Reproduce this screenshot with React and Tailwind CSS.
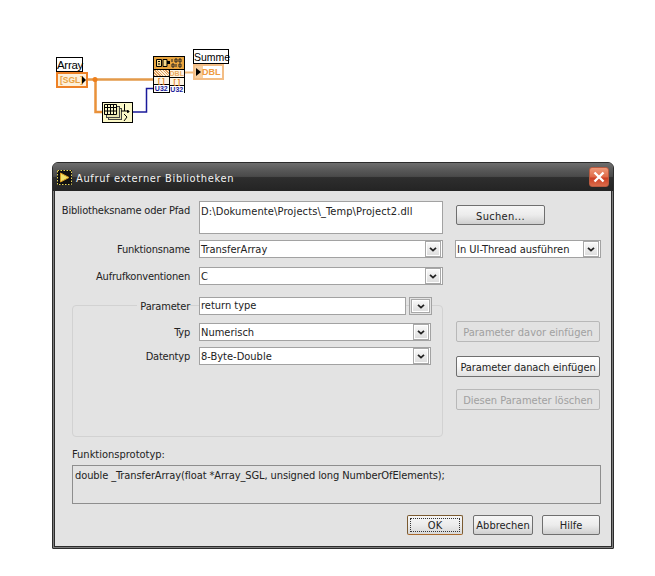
import React from "react";

function Chevron() {
  return (
    <svg width="8" height="5" viewBox="0 0 8 5">
      <path d="M1 0.8 L4 3.6 L7 0.8" fill="none" stroke="#222" strokeWidth="1.8" />
    </svg>
  );
}

function ArrowBox({ className = "w-[16px] h-[16px]" }) {
  return (
    <span className={"flex items-center justify-center border border-[#a8a8a8] bg-gradient-to-b from-[#fafafa] to-[#dcdcdc] shadow-[inset_0_0_0_1px_#fff] shrink-0 " + className}>
      <Chevron />
    </span>
  );
}

function Combo({ text, className = "" }) {
  return (
    <div className={"flex items-center justify-between h-[18px] border border-[#a2a2a2] bg-white pl-[1px] pr-[1px] text-[#222] " + className}>
      <span className="whitespace-nowrap pt-[2px]">{text}</span>
      <ArrowBox />
    </div>
  );
}

function Label({ children, className = "" }) {
  return <div className={"text-right text-[#222] whitespace-nowrap tracking-[-0.2px] pt-[2px] " + className}>{children}</div>;
}

function Btn({ children, className = "", disabled = false }) {
  return (
    <div
      className={
        "flex items-center justify-center h-[20px] rounded-[2px] border whitespace-nowrap pt-[2px] " +
        (disabled
          ? "border-[#b8b8b8] bg-[#e2e2e2] text-[#a0a0a0] "
          : "border-[#6f6f6f] bg-gradient-to-b from-[#f6f6f6] via-[#ececec] to-[#cfcfcf] text-[#222] ") +
        className
      }
    >
      {children}
    </div>
  );
}

function Diagram() {
  return (
    <div className="relative h-[162px] w-full" style={{ fontFamily: '"Liberation Sans", sans-serif', fontStretch: "normal" }}>
      <svg className="absolute left-0 top-0" width="240" height="130">
        <path d="M88 79.5 H153" stroke="#e39a4a" strokeWidth="2.5" fill="none" />
        <path d="M95.5 80 V112 H102" stroke="#e9913a" strokeWidth="2.5" fill="none" />
        <circle cx="95" cy="79.5" r="2.5" fill="#ef7f1a" />
        <path d="M133 112 H146.5 V88.5 H153" stroke="#1a1a9a" strokeWidth="1.5" fill="none" />
        <path d="M184 72.5 H193" stroke="#f0b878" strokeWidth="2" fill="none" />
      </svg>

      <div className="absolute left-[56px] top-[57px] w-[27px] h-[15px] border border-black bg-white text-[11.5px] leading-[14px] text-center text-black tracking-[-0.3px]">Array</div>
      <div className="absolute left-[56px] top-[72px] w-[32px] h-[16px] border-[2px] border-[#ee8126] bg-[#fdf0da] flex items-center">
        <span className="text-[8.5px] font-bold leading-none text-[#e8a040] pl-[2px]">[SGL]</span>
        <span className="absolute right-[0px] top-[2px] w-0 h-0 border-y-[4px] border-y-transparent border-l-[4px] border-l-black" />
      </div>

      <div className="absolute left-[193px] top-[49px] w-[36px] h-[15px] border border-black bg-white text-[10.5px] leading-[14px] text-center text-black">Summe</div>
      <div className="absolute left-[193px] top-[64px] w-[31px] h-[16px] border-[2px] border-[#f3bd85] bg-white flex items-center">
        <span className="absolute left-0 top-0 w-[8px] h-[12px] bg-[#f8cfa0]" />
        <span className="absolute left-[1px] top-[2px] w-0 h-0 border-y-[4px] border-y-transparent border-l-[5px] border-l-black" />
        <span className="relative text-[9px] font-bold leading-none text-[#ee9a40] pl-[7px]">DBL</span>
      </div>

      <div className="absolute left-[153px] top-[56px] w-[32px] h-[37px] bg-black p-[1px] flex flex-col gap-[1px]">
        <div className="h-[12px] bg-[#e9a53f] flex items-center justify-center">
          <svg width="28" height="10" viewBox="0 0 28 10">
            <path d="M1.5 1.5h5v7h-5zM8 1.5h4v7H8zM3 3.5h2M3 6h2" fill="#f7d98a" stroke="#000" strokeWidth="1" />
            <rect x="12" y="3" width="3" height="3" fill="#000" />
            <path d="M17 1v3M20 1h2v3h-2zM24 1h2v3h-2zM17 6h2v3h-2zM21 6v3M24 6h2v3h-2z" fill="none" stroke="#222" strokeWidth="1" />
          </svg>
        </div>
        <div className="flex gap-[1px] flex-1 min-h-0">
          <div className="flex-1 flex flex-col gap-[1px]">
            <div className="h-[7px] bg-[repeating-linear-gradient(45deg,#e0a060_0px,#e0a060_1px,#fff0d8_1px,#fff0d8_2px)]" />
            <div className="h-[7px] bg-[#fdf5e6] flex items-center justify-center text-[7px] leading-none font-bold text-[#e08020]">[ ]</div>
            <div className="h-[7px] bg-white flex items-center justify-center text-[7px] leading-none font-bold text-[#1a1a9a]">U32</div>
          </div>
          <div className="flex-1 flex flex-col gap-[1px]">
            <div className="h-[7px] bg-[#fdf5e6] flex items-center justify-center text-[7px] leading-none font-bold text-[#e8a860]">DBL</div>
            <div className="h-[7px] bg-[#fdf5e6] flex items-center justify-center text-[7px] leading-none font-bold text-[#e08020]">[ ]</div>
            <div className="h-[7px] bg-white flex items-center justify-center text-[7px] leading-none font-bold text-[#1a1a9a]">U32</div>
          </div>
        </div>
      </div>

      <div className="absolute left-[102px] top-[102px] w-[31px] h-[21px] border border-black bg-[#fbf8c8]">
        <svg width="29" height="19" viewBox="0 0 29 19" className="block">
          <rect x="5.5" y="5.5" width="13" height="11" fill="#e6e3b0" stroke="#444" />
          <rect x="3.5" y="3.5" width="13" height="11" fill="#e6e3b0" stroke="#444" />
          <path d="M1.5 1.5h12v10h-12zM1.5 4.5h12M1.5 8h12M4.5 1.5v10M7.5 1.5v10M10.5 1.5v10" fill="#fbf8c8" stroke="#000" />
          <path d="M21.5 1v7M18 8h7M25 7v3M21 11l3 3-3 4" fill="none" stroke="#000" />
          <path d="M24 7l3 1.5L24 10z" fill="#000" />
        </svg>
      </div>
    </div>
  );
}

export default function App() {
  return (
    <div
      className="w-[655px] h-[576px] bg-white overflow-hidden text-[11px] leading-[14px]"
      style={{ fontFamily: '"DejaVu Sans Condensed", "DejaVu Sans", sans-serif', fontStretch: "condensed" }}
    >
      <Diagram />
      <div className="ml-[52px] w-[562px] h-[387px] rounded-t-[6px] rounded-b-[1px] border border-[#2c2c2c] bg-[#7c7c7c] flex flex-col">
        <div className="h-[28px] shrink-0 rounded-t-[5px] flex items-center pl-[4px] pr-[4px] bg-[linear-gradient(to_bottom,#6e6e6e_0%,#555_30%,#4a4a4a_48%,#2e2e2e_52%,#242424_100%)]">
          <svg width="15" height="15" viewBox="0 0 15 15" className="shrink-0">
            <rect x="0" y="0" width="15" height="15" fill="#111" />
            <rect x="0.5" y="0.5" width="14" height="14" fill="none" stroke="#e9d75a" strokeWidth="1" strokeDasharray="1.5 1.5" />
            <path d="M3.5 3 L12 7.5 L3.5 12 Z" fill="#f2e36a" stroke="#d89a20" />
          </svg>
          <span className="ml-[4px] pt-[4px] text-[11px] text-[#f4f4f4] tracking-[0.65px] whitespace-nowrap">Aufruf externer Bibliotheken</span>
          <span className="ml-auto w-[20px] h-[20px] rounded-[3px] border border-[#b85a40] bg-[linear-gradient(to_bottom,#ee9a7a_0%,#e06a48_50%,#cc3f24_55%,#d96b4a_100%)] flex items-center justify-center">
            <svg width="12" height="12" viewBox="0 0 12 12">
              <path d="M1.5 1.5 L10.5 10.5 M10.5 1.5 L1.5 10.5" stroke="#fff" strokeWidth="2.4" />
            </svg>
          </span>
        </div>

        <div className="flex-1 mx-[1px] mb-[1px] border-x border-b border-[#2c2c2c] bg-[#e3e3e3] pt-[10px] flex flex-col">
          <div className="flex items-start">
            <Label className="w-[135px] pt-[3px]">Bibliotheksname oder Pfad</Label>
            <div className="ml-[9px] w-[244px] h-[33px] border border-[#a2a2a2] bg-white pl-[1px] pt-[3px] text-[#222] whitespace-nowrap tracking-[0.12px]">D:\Dokumente\Projects\_Temp\Project2.dll</div>
            <Btn className="ml-[13px] mt-[4px] w-[89px] tracking-[0.3px] pt-[3px]">Suchen...</Btn>
          </div>

          <div className="flex items-center mt-[6px]">
            <Label className="w-[135px]">Funktionsname</Label>
            <Combo text="TransferArray" className="ml-[9px] w-[244px]" />
            <Combo text="In UI-Thread ausführen" className="ml-[12px] w-[146px]" />
          </div>

          <div className="flex items-center mt-[9px]">
            <Label className="w-[135px]">Aufrufkonventionen</Label>
            <Combo text="C" className="ml-[9px] w-[244px]" />
          </div>

          <div className="flex mt-[20px] items-start">
            <div className="ml-[17px] w-[371px] h-[132px] rounded-[4px] border border-[#d2d2d2] shrink-0">
              <div className="flex items-center -mt-[9px]">
                <div className="w-[117px] flex justify-end">
                  <span className="bg-[#e3e3e3] pl-[3px] text-[#222] whitespace-nowrap tracking-[-0.2px] pt-[2px]">Parameter</span>
                </div>
                <div className="ml-[9px] w-[207px] h-[18px] border border-[#a2a2a2] bg-white pl-[1px] leading-[16px] text-[#222]">return type</div>
                <div className="ml-[3px] w-[23px] h-[18px] border border-[#a2a2a2] bg-[#e3e3e3] flex items-center justify-center">
                  <ArrowBox className="w-[19px] h-[14px]" />
                </div>
              </div>
              <div className="flex items-center mt-[8px]">
                <Label className="w-[117px]">Typ</Label>
                <Combo text="Numerisch" className="ml-[9px] w-[232px]" />
              </div>
              <div className="flex items-center mt-[6px]">
                <Label className="w-[117px]">Datentyp</Label>
                <Combo text="8-Byte-Double" className="ml-[9px] w-[232px]" />
              </div>
            </div>
            <div className="ml-[13px] w-[144px] pt-[16px] flex flex-col">
              <Btn disabled className="h-[21px]">Parameter davor einfügen</Btn>
              <Btn className="h-[21px] mt-[14px] border-[#3a3a3a] from-white via-[#f8f8f8] to-[#e0e0e0] tracking-[-0.1px]">Parameter danach einfügen</Btn>
              <Btn disabled className="h-[21px] mt-[12px]">Diesen Parameter löschen</Btn>
            </div>
          </div>

          <div className="ml-[17px] mt-[10px] h-[14px] text-[#222] pt-[1px]">Funktionsprototyp:</div>
          <div className="ml-[17px] mt-[4px] w-[529px] h-[39px] border border-[#8e8e8e] pl-[2px] pt-[3px] text-[#222] whitespace-nowrap tracking-[-0.1px]">
            double _TransferArray(float *Array_SGL, unsigned long NumberOfElements);
          </div>

          <div className="flex mt-[11px] ml-[352px]">
            <Btn className="w-[56px] border-[#7a5a30] border-b-[#a8682a] p-[2px] from-[#f4f4f4] to-[#d8d8d8]">
              <span className="flex items-center justify-center w-full h-full border border-dotted border-[#333] pt-[2px]">OK</span>
            </Btn>
            <Btn className="w-[60px] ml-[10px]">Abbrechen</Btn>
            <Btn className="w-[58px] ml-[9px]">Hilfe</Btn>
          </div>
        </div>
      </div>
    </div>
  );
}
